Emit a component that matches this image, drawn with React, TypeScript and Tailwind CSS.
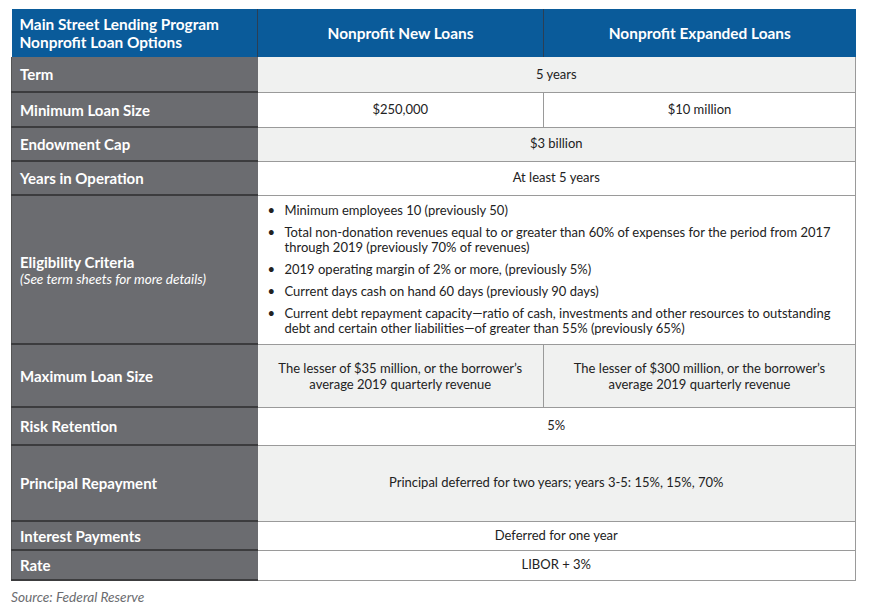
import React from "react";

type Row = {
  label: string;
  sub?: string;
  h: string;
  bg: string;
  cells: React.ReactNode[];
};

const light = "bg-[#f0f1f0]";
const white = "bg-white";

const bullets = [
  "Minimum employees 10 (previously 50)",
  "Total non-donation revenues equal to or greater than 60% of expenses for the period from 2017 through 2019 (previously 70% of revenues)",
  "2019 operating margin of 2% or more, (previously 5%)",
  "Current days cash on hand 60 days (previously 90 days)",
  "Current debt repayment capacity\u2014ratio of cash, investments and other resources to outstanding debt and certain other liabilities\u2014of greater than 55% (previously 65%)",
];

const rows: Row[] = [
  { label: "Term", h: "h-[35px]", bg: light, cells: ["5 years"] },
  { label: "Minimum Loan Size", h: "h-[35px]", bg: white, cells: ["$250,000", "$10 million"] },
  { label: "Endowment Cap", h: "h-[34px]", bg: light, cells: ["$3 billion"] },
  { label: "Years in Operation", h: "h-[34px]", bg: white, cells: ["At least 5 years"] },
  {
    label: "Eligibility Criteria",
    sub: "(See term sheets for more details)",
    h: "h-[149px]",
    bg: white,
    cells: [
      <ul className="flex flex-col gap-[7px] text-left pl-[10px] pr-3">
        {bullets.map((b) => (
          <li key={b} className="flex leading-[15px]">
            <span className="w-[17px] shrink-0">•</span>
            <span>{b}</span>
          </li>
        ))}
      </ul>,
    ],
  },
  {
    label: "Maximum Loan Size",
    h: "h-[63px]",
    bg: light,
    cells: [
      <span className="block px-4 leading-[16px]">
        The lesser of $35 million, or the borrower’s average 2019 quarterly revenue
      </span>,
      <span className="block px-6 leading-[16px]">
        The lesser of $300 million, or the borrower’s average 2019 quarterly revenue
      </span>,
    ],
  },
  { label: "Risk Retention", h: "h-[38px]", bg: white, cells: ["5%"] },
  {
    label: "Principal Repayment",
    h: "h-[76px]",
    bg: light,
    cells: ["Principal deferred for two years; years 3-5: 15%, 15%, 70%"],
  },
  { label: "Interest Payments", h: "h-[29px]", bg: white, cells: ["Deferred for one year"] },
  { label: "Rate", h: "h-[30px]", bg: white, cells: ["LIBOR + 3%"] },
];

export default function App() {
  return (
    <div className="w-[870px] h-[610px] bg-white font-['Lato','Liberation_Sans',sans-serif] pt-[9px] pl-[11px]">
      <table className="w-[844px] border-collapse table-fixed">
        <colgroup>
          <col className="w-[246px]" />
          <col className="w-[286px]" />
          <col className="w-[312px]" />
        </colgroup>
        <thead>
          <tr className="h-[48px] bg-[#0a5b9a] text-white font-bold text-[15.4px] leading-[18px]">
            <th className="text-left pl-[8px] border-r border-[#2b3f55] font-bold">
              Main Street Lending Program
              <br />
              Nonprofit Loan Options
            </th>
            <th className="border-r border-[#2b3f55] font-bold">Nonprofit New Loans</th>
            <th className="font-bold">Nonprofit Expanded Loans</th>
          </tr>
        </thead>
        <tbody>
          {rows.map((r) => (
            <tr key={r.label} className={r.h}>
              <td className="bg-[#6b6c70] text-white pl-[8px] border-b-2 border-[#3c3c3e] border-l border-l-[#555] align-middle">
                <div className="text-[15px] font-bold leading-[18px]">{r.label}</div>
                {r.sub && (
                  <div className="text-[13.6px] italic leading-[16px]">{r.sub}</div>
                )}
              </td>
              {r.cells.length === 1 ? (
                <td
                  colSpan={2}
                  className={`${r.bg} text-[13px] text-[#222] text-center border-b border-r border-[#9a9a9a] align-middle`}
                >
                  {r.cells[0]}
                </td>
              ) : (
                r.cells.map((c, i) => (
                  <td
                    key={i}
                    className={`${r.bg} text-[13px] text-[#222] text-center border-b border-r border-[#9a9a9a] align-middle`}
                  >
                    {c}
                  </td>
                ))
              )}
            </tr>
          ))}
        </tbody>
      </table>
      <div className="mt-[6px] text-[13.7px] italic text-[#6b6c70]">Source: Federal Reserve</div>
    </div>
  );
}
